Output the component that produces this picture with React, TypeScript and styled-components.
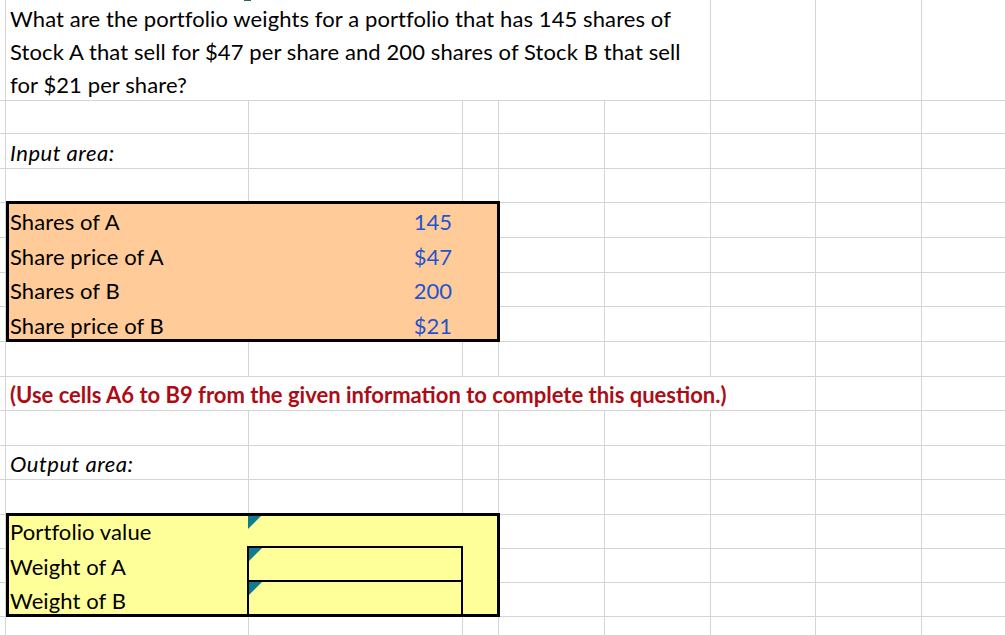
import React from 'react';
import styled, { createGlobalStyle } from 'styled-components';

const GlobalStyle = createGlobalStyle`
  html, body {
    margin: 0;
    background: #fff;
    overflow: hidden;
  }
  body {
    font-family: Lato, "Liberation Sans", sans-serif;
    font-size: 22px;
    color: #000;
  }
`;

// row heights / column widths measured off the sheet, gridlines are the 1px gaps
const ROWS = [100, 32, 34, 33, 34, 34, 33, 34, 34, 33, 34, 33, 34, 33, 33, 33, 40];
const COLS = '5px 242px 213px 35px 105px 105px 104px 105px 1fr';

type Area = { row: number; col: number; rowSpan: number; colSpan: number };

const AREAS: Area[] = [
  { row: 1, col: 2, rowSpan: 1, colSpan: 5 },  // question
  { row: 3, col: 2, rowSpan: 1, colSpan: 1 },  // input label
  { row: 5, col: 2, rowSpan: 4, colSpan: 3 },  // input box
  { row: 10, col: 2, rowSpan: 1, colSpan: 6 }, // note
  { row: 12, col: 2, rowSpan: 1, colSpan: 1 }, // output label
  { row: 14, col: 2, rowSpan: 3, colSpan: 3 }, // output box
];

const covered = (r: number, c: number) =>
  AREAS.some((a) => r >= a.row && r < a.row + a.rowSpan && c >= a.col && c < a.col + a.colSpan);

const Sheet = styled.div`
  position: relative;
  display: grid;
  grid-template-columns: ${COLS};
  grid-template-rows: ${ROWS.map((h) => h + 'px').join(' ')};
  gap: 1px;
  background: #d4d4d4;
  width: 1005px;
`;

const SelectTick = styled.span`
  position: absolute;
  top: 0;
  left: 244px;
  width: 7px;
  height: 1px;
  background: #1e7145;
`;

const Cell = styled.div<{ $row: number; $col: number; $rowSpan?: number; $colSpan?: number }>`
  grid-row: ${(p) => p.$row} / span ${(p) => p.$rowSpan ?? 1};
  grid-column: ${(p) => p.$col} / span ${(p) => p.$colSpan ?? 1};
  background: #fff;
  min-width: 0;
  white-space: nowrap;
`;

const QuestionCell = styled(Cell)`
  padding: 2px 0 0 4px;
  line-height: 33px;
  letter-spacing: 0.1px;
`;

const LabelCell = styled(Cell)`
  display: flex;
  align-items: flex-end;
  padding: 0 0 2px 4px;
  font-style: italic;
  letter-spacing: 0.5px;
`;

const NoteCell = styled(Cell)`
  display: flex;
  align-items: flex-end;
  padding: 0 0 2px 4px;
  font-weight: 700;
  color: #ad0c16;
`;

const Box = styled(Cell)<{ $fill: string; $rows: string }>`
  position: relative;
  z-index: 1;
  margin: -2px -2px -1px 0;
  border: 3px solid #000;
  background: ${(p) => p.$fill};
  display: grid;
  grid-template-columns: 238px 216px 1fr;
  grid-template-rows: ${(p) => p.$rows};
`;

const BoxLabel = styled.div<{ $pb?: number }>`
  display: flex;
  align-items: flex-end;
  padding: 0 0 ${(p) => p.$pb ?? 2}px 1px;
  letter-spacing: 0.1px;
`;

const BoxValue = styled.div<{ $pb?: number }>`
  display: flex;
  align-items: flex-end;
  justify-content: flex-end;
  padding: 0 11px ${(p) => p.$pb ?? 2}px 0;
  color: #1f55d0;
`;

const Slot = styled.div<{ $framed?: boolean }>`
  position: relative;
  border: ${(p) => (p.$framed ? '2px solid #000' : 'none')};
  border-bottom: none;
  padding-left: ${(p) => (p.$framed ? 0 : 1)}px;
`;

const Marker = styled.span`
  position: absolute;
  top: 0;
  left: ${(p: { $left: number }) => p.$left}px;
  width: 13px;
  height: 13px;
  background: #0f7b8e;
  clip-path: polygon(0 0, 100% 0, 0 100%);
`;

const inputs = [
  ['Shares of A', '145'],
  ['Share price of A', '$47'],
  ['Shares of B', '200'],
  ['Share price of B', '$21'],
];

const outputs = ['Portfolio value', 'Weight of A', 'Weight of B'];

export default function App() {
  const blanks: React.ReactNode[] = [];
  ROWS.forEach((_, i) => {
    for (let c = 1; c <= 9; c++) {
      if (!covered(i + 1, c)) blanks.push(<Cell key={`${i}-${c}`} $row={i + 1} $col={c} />);
    }
  });

  return (
    <>
      <GlobalStyle />
      <Sheet>
        {blanks}
        <QuestionCell $row={1} $col={2} $colSpan={5}>
          What are the portfolio weights for a portfolio that has 145 shares of
          <br />
          Stock A that sell for $47 per share and 200 shares of Stock B that sell
          <br />
          for $21 per share?
        </QuestionCell>

        <LabelCell $row={3} $col={2}>Input area:</LabelCell>

        <Box $row={5} $col={2} $rowSpan={4} $colSpan={3} $fill="#ffcc99" $rows="33px 35px 34px 33px">
          {inputs.map(([label, value], i) => (
            <React.Fragment key={label}>
              <BoxLabel $pb={i === 3 ? 0 : 2}>{label}</BoxLabel>
              <BoxValue $pb={i === 3 ? 0 : 2}>{value}</BoxValue>
              <div />
            </React.Fragment>
          ))}
        </Box>

        <NoteCell $row={10} $col={2} $colSpan={6}>
          (Use cells A6 to B9 from the given information to complete this question.)
        </NoteCell>

        <LabelCell $row={12} $col={2}>Output area:</LabelCell>

        <Box $row={14} $col={2} $rowSpan={3} $colSpan={3} $fill="#ffff99" $rows="30px 34px 34px">
          {outputs.map((label, i) => (
            <React.Fragment key={label}>
              <BoxLabel $pb={i === 0 ? 1 : 0}>{label}</BoxLabel>
              <Slot $framed={i > 0}>
                <Marker $left={i > 0 ? 0 : 1} />
              </Slot>
              <div />
            </React.Fragment>
          ))}
        </Box>
        <SelectTick />
      </Sheet>
    </>
  );
}
